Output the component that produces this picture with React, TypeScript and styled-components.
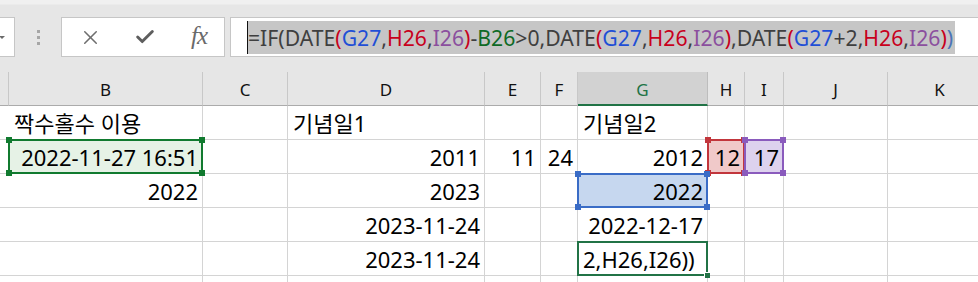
import styled, { createGlobalStyle } from "styled-components";
import { X, Check } from "lucide-react";

const GlobalStyle = createGlobalStyle`
  body {
    margin: 0;
    background: #ffffff;
    overflow: hidden;
  }
`;

const Page = styled.div`
  width: 978px;
  height: 282px;
  overflow: hidden;
  background: #e6e6e6;
  font-family: "Noto Sans", "Noto Sans CJK KR", sans-serif;
`;

const FormulaBar = styled.div`
  display: flex;
  align-items: stretch;
  height: 40px;
  padding-top: 17px;
  margin-bottom: 15px;
  background: linear-gradient(#f0f0f0 0px, #f0f0f0 4px, #e6e6e6 5px);
`;

const NameBox = styled.div`
  width: 15px;
  box-sizing: border-box;
  background: #ffffff;
  border: 1px solid #c6c6c6;
  border-left: none;
  display: flex;
  align-items: center;
  justify-content: flex-start;
  padding-left: 1px;
`;

const Caret = styled.span`
  width: 0;
  height: 0;
  border-left: 3px solid transparent;
  border-right: 3px solid transparent;
  border-top: 3px solid #6a6a6a;
  margin-left: -2px;
`;

const Dots = styled.div`
  width: 46px;
  display: flex;
  flex-direction: column;
  align-items: center;
  justify-content: center;
  gap: 3px;
  span {
    width: 3px;
    height: 3px;
    background: #a6a6a6;
  }
`;

const ButtonBox = styled.div`
  width: 164px;
  box-sizing: border-box;
  background: #ffffff;
  border: 1px solid #c6c6c6;
  display: grid;
  grid-template-columns: 54px 54px 54px;
  align-items: center;
  justify-items: center;
`;

const Fx = styled.span`
  font-family: "Liberation Serif", serif;
  font-style: italic;
  font-size: 25px;
  color: #6a6a6a;
  letter-spacing: -1px;
  margin-left: 4px;
  margin-top: -3px;
`;

const FormulaInput = styled.div`
  flex: 1;
  margin-left: 5px;
  margin-right: -10px;
  box-sizing: border-box;
  background: #ffffff;
  border: 1px solid #c6c6c6;
  display: flex;
  align-items: center;
  padding-left: 16px;
`;

const TextCaret = styled.span`
  width: 1px;
  height: 33px;
  background: #111111;
`;

const Selected = styled.span`
  background: #c6c6c6;
  height: 33px;
  display: flex;
  align-items: center;
  font-size: 21.2px;
  white-space: pre;
  color: #3f3f3f;
  padding-right: 2px;
`;

const Tok = styled.span<{ $c?: string }>`
  color: ${(p) => p.$c || "#3f3f3f"};
`;

const Sheet = styled.div`
  display: grid;
  grid-template-columns: 9px 194px 85px 197px 56px 37px 130px 37px 39px 104px 104px;
  grid-auto-rows: 34px;
`;

const Head = styled.div<{ $active?: boolean }>`
  box-sizing: border-box;
  background: ${(p) => (p.$active ? "#d2d2d2" : "#e6e6e6")};
  color: ${(p) => (p.$active ? "#217346" : "#111111")};
  border-right: 1px solid ${(p) => (p.$active ? "#bdbdbd" : "#c8c8c8")};
  border-bottom: ${(p) => (p.$active ? "2px solid #217346" : "1px solid #ababab")};
  display: flex;
  align-items: center;
  justify-content: center;
  font-size: 17px;
  padding-top: 2px;
`;

const Cell = styled.div<{ $align?: "left" | "right"; $bg?: string }>`
  position: relative;
  box-sizing: border-box;
  background: ${(p) => p.$bg || "#ffffff"};
  border-right: 1px solid #d4d4d4;
  border-bottom: 1px solid #d4d4d4;
  display: flex;
  align-items: flex-end;
  justify-content: ${(p) => (p.$align === "left" ? "flex-start" : "flex-end")};
  padding: 0 4px 1px 5px;
  font-size: 22px;
  line-height: 30px;
  color: #000000;
  white-space: nowrap;
  overflow: visible;
`;

const Ring = styled.div<{ $c: string }>`
  position: absolute;
  top: -1px;
  left: -1px;
  right: -1px;
  bottom: -1px;
  border: 2px solid ${(p) => p.$c};
  z-index: 2;
  pointer-events: none;
`;

const Handle = styled.span<{ $c: string; $v: "top" | "bottom"; $h: "left" | "right" }>`
  position: absolute;
  width: 6px;
  height: 6px;
  background: ${(p) => p.$c};
  ${(p) => p.$v}: -4px;
  ${(p) => p.$h}: -4px;
`;

const FillHandle = styled.span`
  position: absolute;
  width: 5px;
  height: 5px;
  background: #217346;
  border-left: 1px solid #ffffff;
  border-top: 1px solid #ffffff;
  right: -4px;
  bottom: -4px;
`;

type Ref = { color: string; fill: string };

const refs: Record<string, Ref> = {
  green: { color: "#117a2f", fill: "#e6f2e6" },
  blue: { color: "#3a6cc6", fill: "#c6d7ef" },
  red: { color: "#c2363c", fill: "#f0c9c9" },
  purple: { color: "#8a5bbd", fill: "#ddd2ee" },
};

const BLUE = "#1f4fd6";
const RED = "#c8001c";
const PURPLE = "#8b4f9e";
const GREEN = "#0e6a25";

const formula: [string, string?][] = [
  ["=IF(DATE"],
  ["(", RED],
  ["G27", BLUE],
  [","],
  ["H26", RED],
  [","],
  ["I26", PURPLE],
  [")", RED],
  ["-"],
  ["B26", GREEN],
  [">0,DATE"],
  ["(", RED],
  ["G27", BLUE],
  [","],
  ["H26", RED],
  [","],
  ["I26", PURPLE],
  [")", RED],
  [",DATE"],
  ["(", RED],
  ["G27", BLUE],
  ["+2,"],
  ["H26", RED],
  [","],
  ["I26", PURPLE],
  [")", RED],
  [")", "#4b74b8"],
];

const columns = ["", "B", "C", "D", "E", "F", "G", "H", "I", "J", "K"];

type CellData = { t?: string; left?: boolean; ref?: keyof typeof refs; active?: boolean };

const rows: CellData[][] = [
  [{}, { t: "짝수홀수 이용", left: true }, {}, { t: "기념일1", left: true }, {}, {}, { t: "기념일2", left: true }, {}, {}, {}, {}],
  [
    {},
    { t: "2022-11-27  16:51", ref: "green" },
    {},
    { t: "2011" },
    { t: "11" },
    { t: "24" },
    { t: "2012" },
    { t: "12", ref: "red" },
    { t: "17", ref: "purple" },
    {},
    {},
  ],
  [{}, { t: "2022" }, {}, { t: "2023" }, {}, {}, { t: "2022", ref: "blue" }, {}, {}, {}, {}],
  [{}, {}, {}, { t: "2023-11-24" }, {}, {}, { t: "2022-12-17" }, {}, {}, {}, {}],
  [{}, {}, {}, { t: "2023-11-24" }, {}, {}, { t: "2,H26,I26))", left: true, active: true }, {}, {}, {}, {}],
  Array.from({ length: 11 }, () => ({})),
];

function SheetCell({ d }: { d: CellData }) {
  const r = d.ref ? refs[d.ref] : undefined;
  return (
    <Cell $align={d.left ? "left" : "right"} $bg={r?.fill}>
      {d.t}
      {r && (
        <Ring $c={r.color}>
          <Handle $c={r.color} $v="top" $h="left" />
          <Handle $c={r.color} $v="top" $h="right" />
          <Handle $c={r.color} $v="bottom" $h="left" />
          <Handle $c={r.color} $v="bottom" $h="right" />
        </Ring>
      )}
      {d.active && (
        <Ring $c="#217346">
          <FillHandle />
        </Ring>
      )}
    </Cell>
  );
}

export default function App() {
  return (
    <Page>
      <GlobalStyle />
      <FormulaBar>
        <NameBox>
          <Caret />
        </NameBox>
        <Dots>
          <span />
          <span />
          <span />
        </Dots>
        <ButtonBox>
          <X size={23} color="#6e6e6e" strokeWidth={1.6} style={{ marginLeft: 2 }} />
          <Check size={22} color="#5e5e5e" strokeWidth={3.2} style={{ marginLeft: 4 }} />
          <Fx>fx</Fx>
        </ButtonBox>
        <FormulaInput>
          <TextCaret />
          <Selected>
            {formula.map(([t, c], i) => (
              <Tok key={i} $c={c}>
                {t}
              </Tok>
            ))}
          </Selected>
        </FormulaInput>
      </FormulaBar>
      <Sheet>
        {columns.map((c) => (
          <Head key={c || "A"} $active={c === "G"}>
            {c}
          </Head>
        ))}
        {rows.map((row, ri) => row.map((d, ci) => <SheetCell key={`${ri}-${ci}`} d={d} />))}
      </Sheet>
    </Page>
  );
}
